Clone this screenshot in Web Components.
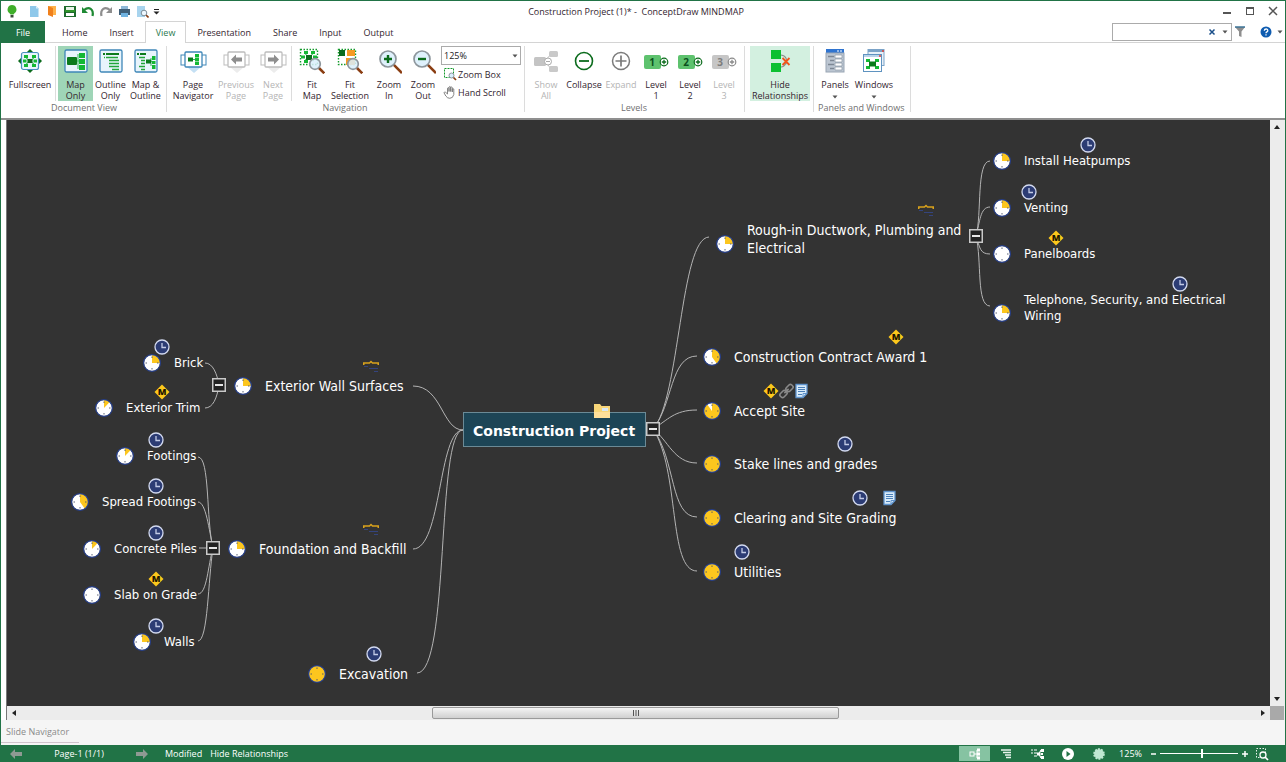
<!DOCTYPE html>
<html lang="en">
<head>
<meta charset="utf-8">
<title>Construction Project (1)* - ConceptDraw MINDMAP</title>
<style>
  html, body {
    height: 100%;
    margin: 0;
  }
  body {
    font-family: "Open Sans", "Noto Sans", sans-serif;
    font-size: 9px;
    color: #33252f;
    --green: #217346;
  }
</style>
</head>
<body>
<mindmap-app>
  <title-bar slot="title">Construction Project (1)* -&nbsp; ConceptDraw MINDMAP</title-bar>
  <tab-strip slot="tabs" tabs="Home,Insert,View,Presentation,Share,Input,Output" active="View"></tab-strip>

  <ribbon-bar slot="ribbon">
    <ribbon-group label="Document View">
      <ribbon-button icon="fullscreen" style="--w: 50px">Fullscreen</ribbon-button>
      <ribbon-rule></ribbon-rule>
      <ribbon-button icon="mapOnly" on style="--w: 35px">Map<br>Only</ribbon-button>
      <ribbon-button icon="outlineOnly" style="--w: 35px">Outline<br>Only</ribbon-button>
      <ribbon-button icon="mapOutline" style="--w: 35px">Map &amp;<br>Outline</ribbon-button>
    </ribbon-group>
    <ribbon-group label="Navigation">
      <ribbon-button icon="pageNavigator" style="--w: 48px">Page<br>Navigator</ribbon-button>
      <ribbon-button icon="previousPage" off style="--w: 38px">Previous<br>Page</ribbon-button>
      <ribbon-button icon="nextPage" off style="--w: 36px">Next<br>Page</ribbon-button>
      <ribbon-rule></ribbon-rule>
      <ribbon-button icon="fitMap" style="--w: 36px">Fit<br>Map</ribbon-button>
      <ribbon-button icon="fitSelection" style="--w: 40px">Fit<br>Selection</ribbon-button>
      <ribbon-button icon="zoomIn" style="--w: 38px">Zoom<br>In</ribbon-button>
      <ribbon-button icon="zoomOut" style="--w: 30px">Zoom<br>Out</ribbon-button>
      <zoom-panel></zoom-panel>
    </ribbon-group>
    <ribbon-group label="Levels">
      <ribbon-button icon="showAll" off style="--w: 38px">Show<br>All</ribbon-button>
      <ribbon-button icon="collapse" style="--w: 38px">Collapse</ribbon-button>
      <ribbon-button icon="expand" off style="--w: 36px">Expand</ribbon-button>
      <ribbon-button icon="level1" style="--w: 34px">Level<br>1</ribbon-button>
      <ribbon-button icon="level2" style="--w: 34px">Level<br>2</ribbon-button>
      <ribbon-button icon="level3" off style="--w: 34px">Level<br>3</ribbon-button>
    </ribbon-group>
    <ribbon-group label="">
      <ribbon-button icon="hideRelationships" hot style="--w: 60px">Hide<br>Relationships</ribbon-button>
    </ribbon-group>
    <ribbon-group label="Panels and Windows">
      <ribbon-button icon="panels" menu style="--w: 38px">Panels</ribbon-button>
      <ribbon-button icon="windows" menu style="--w: 40px">Windows</ribbon-button>
    </ribbon-group>
  </ribbon-bar>

  <mind-map slot="map" scroll-x="7" scroll-y="120">
    <root-topic x="463" y="412">Construction Project</root-topic>

    <map-topic x="725" y="239" tall progress="25" badges="brace" shift="171">Rough-in Ductwork, Plumbing and<br>Electrical</map-topic>
    <map-topic x="1002" y="161" sub progress="25" badges="clock" shift="56">Install Heatpumps</map-topic>
    <map-topic x="1002" y="208" sub progress="25" badges="clock" shift="-3">Venting</map-topic>
    <map-topic x="1002" y="254" sub progress="0" badges="milestone" shift="24">Panelboards</map-topic>
    <map-topic x="1002" y="308" sub tall progress="25" badges="clock" shift="148">Telephone, Security, and Electrical<br>Wiring</map-topic>
    <map-topic x="712" y="357" progress="40" badges="milestone" shift="154">Construction Contract Award 1</map-topic>
    <map-topic x="712" y="411" progress="90" badges="milestone,link,note" shift="29">Accept Site</map-topic>
    <map-topic x="712" y="464" progress="100" badges="clock" shift="103">Stake lines and grades</map-topic>
    <map-topic x="712" y="518" progress="100" badges="clock,blank,note" shift="118">Clearing and Site Grading</map-topic>
    <map-topic x="712" y="572" progress="100" badges="clock" shift="0">Utilities</map-topic>

    <map-topic x="243" y="386" progress="25" badges="brace" shift="98">Exterior Wall Surfaces</map-topic>
    <map-topic x="152" y="363" sub progress="25" badges="clock" shift="-20">Brick</map-topic>
    <map-topic x="104" y="408" sub progress="12" badges="milestone" shift="28">Exterior Trim</map-topic>
    <map-topic x="237" y="549" progress="25" badges="brace" shift="104">Foundation and Backfill</map-topic>
    <map-topic x="125" y="456" sub progress="12" badges="clock" shift="1">Footings</map-topic>
    <map-topic x="80" y="502" sub progress="40" badges="clock" shift="46">Spread Footings</map-topic>
    <map-topic x="92" y="549" sub progress="12" badges="clock" shift="34">Concrete Piles</map-topic>
    <map-topic x="92" y="595" sub progress="0" badges="milestone" shift="34">Slab on Grade</map-topic>
    <map-topic x="142" y="642" sub progress="25" badges="clock" shift="-16">Walls</map-topic>
    <map-topic x="317" y="674" progress="100" badges="clock" shift="27">Excavation</map-topic>
  </mind-map>

  <slide-panel slot="panel">Slide Navigator</slide-panel>
  <status-bar slot="status"></status-bar>
</mindmap-app>

<script>
const svg = (w, h, body) =>
  `<svg width="${w}" height="${h}" viewBox="0 0 ${w} ${h}" aria-hidden="true">${body}</svg>`;

const frame = '<rect x="1" y="2" width="22" height="22" rx="1.5" fill="#e8f4fc" stroke="#3f87b8" stroke-width="1.3"/>';
const lens = (x, y, r, body = '') => `
  <path d="M${x + r * 0.7} ${y + r * 0.7}L${x + r * 1.75} ${y + r * 1.75}" stroke="#8a3d12" stroke-width="2.6"/>
  <circle cx="${x}" cy="${y}" r="${r}" fill="#d9eefb" fill-opacity="0.85" stroke="#8d969c" stroke-width="1.7"/>${body}`;
const pagePair = (edge, fill) => `
  <path d="M7 19h14l-7 6z" fill="${fill}"/>
  <rect x="1" y="7" width="5" height="10" fill="#fff" stroke="${edge}"/>
  <rect x="21" y="7" width="5" height="10" fill="#fff" stroke="${edge}"/>
  <rect x="5" y="4" width="17" height="15" rx="1" fill="#fff" stroke="${edge}" stroke-width="1.3"/>`;
const level = (n, tile, edge, text) => svg(26, 26, `
  <rect x="1" y="7" width="17" height="14" rx="2" fill="${tile}"/>
  <text x="9" y="18" text-anchor="middle" font-family="Open Sans" font-weight="700" font-size="10" fill="${text}">${n}</text>
  <circle cx="21" cy="14" r="3.8" fill="#fff" stroke="${edge}" stroke-width="1.2"/>
  <path d="M18.8 14h4.4M21 11.8v4.4" stroke="${edge}" stroke-width="1.3"/>`);

const icons = {
  fullscreen: svg(26, 26, `
    <path d="M13 1l4 4H9zM13 25l4-4H9zM1 13l4-4v8zM25 13l-4-4v8z" fill="#0b6b1c"/>
    <rect x="4.500" y="4.500" width="17" height="17" rx="2" fill="#e8f4fc" stroke="#4a90c0" stroke-width="1.2"/>
    <path d="M8 9l10 8M18 9L8 17" stroke="#1fb53a" stroke-width="1"/>
    <path d="M7 7h4v3H7zM15 7h4v3h-4zM7 16h4v3H7zM15 16h4v3h-4zM6 11.500h3.500v3H6zM16.500 11.500H20v3h-3.500z" fill="#14b834"/>
    <rect x="10.500" y="11" width="5" height="4" fill="#0b6b1c"/>`),
  mapOnly: svg(24, 26, `${frame}
    <path d="M12 13h4M14 6v15" stroke="#35b558"/>
    <rect x="3" y="9" width="10" height="8" rx="1" fill="#0b7a1c"/>
    <path d="M15 5h6v5h-6zM15 11h6v5h-6zM15 17h6v5h-6z" fill="#14b834"/>`),
  outlineOnly: svg(24, 26, `${frame}
    <path d="M4 6h2M7 6h13" stroke="#0b7a1c" stroke-width="2"/>
    <path d="M7 9.500h12M10 12.500h10M10 15.500h10M10 18.500h10M13 21.500h7" stroke="#22a63a" stroke-width="1.700"/>
    <path d="M5 9.500h1" stroke="#14b834" stroke-width="1.500"/>`),
  mapOutline: svg(24, 26, `${frame}
    <path d="M3 6h2M6 6h6" stroke="#0b7a1c" stroke-width="2"/>
    <path d="M5 9.500h6M7 12.500h4M7 15.500h4M5 18.500h6M7 21.500h4" stroke="#22a63a" stroke-width="1.700"/>
    <path d="M14 13.500h4M17 10v8" stroke="#35b558"/>
    <rect x="12" y="11.500" width="5" height="4" fill="#0b7a1c"/>
    <path d="M18 8h3.500v4H18zM18 13h3.500v3H18zM18 17h3.500v4H18z" fill="#14b834"/>`),
  pageNavigator: svg(27, 26, `${pagePair('#3f87b8', '#c4e0f4')}
    <path d="M12 11.500h4" stroke="#35b558"/><rect x="8" y="9.500" width="5" height="4" fill="#0b7a1c"/>
    <path d="M15 6h4v3.500h-4zM15 10h4v3h-4zM15 13.500h4V17h-4z" fill="#14b834"/>`),
  previousPage: svg(27, 26, `${pagePair('#bdbdbd', '#ececec')}
    <path d="M8 11.500l5-5v3h6v4h-6v3z" fill="#8e8e8e"/>`),
  nextPage: svg(27, 26, `${pagePair('#bdbdbd', '#ececec')}
    <path d="M19 11.500l-5-5v3H8v4h6v3z" fill="#8e8e8e"/>`),
  fitMap: svg(26, 26, `
    <rect x="1.500" y="1.500" width="17" height="15" fill="none" stroke="#149a2c" stroke-dasharray="1.500 1.500" stroke-width="1.400"/>
    <path d="M5 5l10 8M15 5L5 13" stroke="#35b558"/>
    <path d="M5 3h4v3H5zM12 3h4v3h-4zM5 12h4v3H5zM2 7.500h4v3H2zM14 7.500h4v3h-4z" fill="#14b834"/>
    <rect x="7" y="7" width="6" height="5" fill="#0b6b1c"/>${lens(16, 16, 5.300)}`),
  fitSelection: svg(26, 26, `
    <rect x="1.500" y="1.500" width="17" height="15" fill="none" stroke="#149a2c" stroke-dasharray="1.500 1.500" stroke-width="1.400"/>
    <rect x="2" y="2" width="6" height="6" fill="#0b6b1c"/>
    <path d="M10 2h8v6h-8zM9 10h9v7H9z" fill="#f59a23"/>${lens(16, 16, 5.300)}`),
  zoomIn: svg(26, 26, lens(12, 11, 8, '<path d="M8 11h8M12 7v8" stroke="#0b6b1c" stroke-width="2.400"/>')),
  zoomOut: svg(26, 26, lens(12, 11, 8, '<path d="M8 11h8" stroke="#0b6b1c" stroke-width="2.400"/>')),
  zoomBox: svg(14, 14, `
    <rect x="1.500" y="1.500" width="9" height="9" fill="none" stroke="#149a2c" stroke-dasharray="2 1"/>
    <path d="M10 10l3 3" stroke="#8a3d12" stroke-width="1.700"/>
    <circle cx="8.500" cy="8.500" r="2.500" fill="#d9eefb" stroke="#8d969c"/>`),
  hand: svg(14, 14, `
    <path d="M4.500 9V3.200q.8-1 1.500 0V6.500 2q.8-1 1.700 0V6.500 2.500q.8-1 1.600 0V7 4q.8-.8 1.500 0v5.500q-.8 3.800-4 3.800-2.500 0-4-2.300L1 7.800q.2-1.300 1.700-.5z"
      fill="#fff" stroke="#777" stroke-width="0.900"/>`),
  showAll: svg(26, 26, `
    <path d="M12 13l6-7M12 13l6 8" stroke="#c4c4c4"/>
    <rect x="1" y="9" width="12" height="9" rx="1.500" fill="#c4c4c4"/>
    <rect x="16" y="3" width="9" height="6" rx="1.500" fill="#c9c9c9"/>
    <rect x="16" y="18" width="9" height="6" rx="1.500" fill="#c9c9c9"/>
    <circle cx="15" cy="13.500" r="3.500" fill="#fff" stroke="#aaa"/><path d="M13 13.500h4" stroke="#aaa"/>`),
  collapse: svg(26, 26, '<circle cx="13" cy="13" r="8.500" fill="none" stroke="#0b6b1c" stroke-width="1.600"/><path d="M8 13h10" stroke="#0b6b1c" stroke-width="1.800"/>'),
  expand: svg(26, 26, '<circle cx="13" cy="13" r="8.500" fill="none" stroke="#7b7b7b" stroke-width="1.500"/><path d="M7.500 13h11M13 7.500v11" stroke="#7b7b7b" stroke-width="1.700"/>'),
  level1: level(1, '#5ec26e', '#0b6b1c', '#0b4f1c'),
  level2: level(2, '#5ec26e', '#0b6b1c', '#0b4f1c'),
  level3: level(3, '#c6c6c6', '#8a8a8a', '#7d7d7d'),
  hideRelationships: svg(26, 26, `
    <path d="M14 7c6 1 6 5 5 9M14 19c3 0 4-2 5-4" fill="none" stroke="#8a8a8a" stroke-width="1.200"/>
    <path d="M4 2h10v9H4zM4 15h10v9H4z" fill="#0cc032"/>
    <path d="M15.500 10l7 7M22.500 10l-7 7" stroke="#f2551c" stroke-width="1.800"/>`),
  panels: svg(24, 26, `
    <rect x="3" y="1" width="18" height="4" fill="#2f74d0"/>
    <path d="M14 3h2M17 3h2" stroke="#fff"/>
    <rect x="3" y="5" width="18" height="19" fill="#bcc6d2" stroke="#9aa6b4"/>
    <path d="M5 8.500h6M7 12.500h4M5 16.500h6M7 20.500h4" stroke="#7d8794" stroke-width="1.500"/>
    <path d="M12 7h7v3h-7zM12 11h7v3h-7zM12 15h7v3h-7zM12 19h7v3h-7z" fill="#fff" stroke="#8b96a3" stroke-width="0.700"/>`),
  windows: svg(24, 26, `
    <rect x="6" y="1.500" width="16" height="16" fill="#e8f0f8" stroke="#7ba3c8"/>
    <path d="M6 3h16" stroke="#7ba3c8" stroke-width="2"/>
    <rect x="1.500" y="6.500" width="18" height="17" fill="#fff" stroke="#5f93c0"/>
    <path d="M2 8h17" stroke="#b9d3ea" stroke-width="2"/><path d="M20 3h2M17 8h2" stroke="#e0433a" stroke-width="1.500"/>
    <path d="M5 12l11 8M16 12L5 20" stroke="#35b558"/>
    <path d="M4 11h4v3H4zM13 11h4v3h-4zM4 18h4v3H4zM13 18h4v3h-4z" fill="#14b834"/>
    <rect x="7" y="13.500" width="7" height="5" fill="#0b7a1c"/>`),

  // title bar
  logo: svg(14, 14, '<path d="M7 1a4.500 4.500 0 0 1 2.500 8.200l-1 1.300h-3l-1-1.300A4.500 4.500 0 0 1 7 1z" fill="#3fae2a"/><path d="M5.500 11h3v2.500h-3z" fill="#3a4a3a"/>'),
  newDoc: svg(14, 14, '<path d="M3 2h6l2.500 2.500V13H3z" fill="#8ec8ea"/><path d="M9 2v2.500h2.500z" fill="#d8effb"/>'),
  open: svg(14, 14, '<path d="M3 2h8v9H3z" fill="#ffb24a"/><path d="M3 2l5 2v9l-5-2z" fill="#f0801c"/>'),
  save: svg(14, 14, '<path d="M1 2h12v11H1z" fill="#1d6b2c"/><path d="M3 3h8v3H3z" fill="#e8f4e8"/><path d="M3 9h8v3H3z" fill="#fff"/><path d="M2 7h10" stroke="#3fae2a" stroke-width="1.200"/>'),
  undo: svg(14, 14, '<path d="M3 6c5-4 10-1 8.500 6" fill="none" stroke="#1f8a34" stroke-width="2.200"/><path d="M1 3v6h6z" fill="#1f8a34"/>'),
  redo: svg(14, 14, '<path d="M11 6c-5-4-10-1-8.500 6" fill="none" stroke="#8e8e8e" stroke-width="2.200"/><path d="M13 3v6H7z" fill="#8e8e8e"/>'),
  print: svg(14, 14, '<path d="M4 2h7v3H4z" fill="#8fb9d8"/><path d="M2 5h11v6H2z" fill="#3f5f78"/><path d="M4 9h7v4H4z" fill="#6fb2e0"/>'),
  preview: svg(14, 14, '<path d="M2 2h8v11H2z" fill="#a8d4ee"/><path d="M10.500 10.500l3 3" stroke="#8a3d12" stroke-width="1.600"/><circle cx="9" cy="9" r="2.800" fill="#eef8ff" stroke="#7f8f9a"/>'),
  more: svg(7, 14, '<path d="M1 5.500h5" stroke="#222"/><path d="M.5 7.500h6l-3 3z" fill="#222"/>'),
  minimize: svg(12, 12, '<path d="M2 8h8" stroke="#555" stroke-width="2"/>'),
  maximize: svg(12, 12, '<rect x="2.500" y="2.500" width="7" height="7" fill="none" stroke="#555"/><path d="M2 3h8" stroke="#555" stroke-width="2"/>'),
  close: svg(12, 12, '<path d="M2 2l8 8M10 2l-8 8" stroke="#555" stroke-width="1.500"/>'),
  clear: svg(8, 8, '<path d="M1.500 1.500l5 5M6.500 1.500l-5 5" stroke="#1a4f8a" stroke-width="1.500"/>'),
  caret: svg(6, 4, '<path d="M0.500 0.500h5L3 3.500z" fill="#555"/>'),
  filter: svg(12, 12, '<path d="M1 1h10L7.500 5.500V11L5 10V5.500z" fill="#8e8e8e"/><path d="M1 1h10" stroke="#3d7599" stroke-width="1.500"/>'),
  help: svg(12, 12, '<circle cx="6" cy="6" r="5.500" fill="#0f5cb0"/><path d="M4.300 4.700q.1-1.700 1.800-1.700t1.700 1.500q0 .9-.9 1.400T6 7.300M6 8.300v1.300" fill="none" stroke="#fff" stroke-width="1.300"/>'),

  // map badges
  clock: svg(16, 16, '<circle cx="8" cy="8" r="7" fill="#2c3c74" stroke="#d3daf0" stroke-width="1.300"/><path d="M8 4v4.500h4" fill="none" stroke="#c3cbe6" stroke-width="1.300"/>'),
  milestone: svg(16, 16, '<path d="M8 .5L15.500 8 8 15.500.5 8z" fill="#fcc81c"/><text x="8" y="11" text-anchor="middle" font-family="Open Sans" font-weight="800" font-size="9" fill="#1c1600">M</text>'),
  brace: svg(16, 16, '<path d="M.75 7V5H6.500L8 3.500 9.500 5h5.750v2" fill="none" stroke="#d9a21c" stroke-width="1.500"/><path d="M1 8.500h4M6 10.500h9M11 13.500h4" stroke="#34447e"/>'),
  link: svg(15, 16, '<g fill="none" stroke="#8a8a8a" stroke-width="1.600" transform="rotate(-45 7.500 8)"><rect x="-0.500" y="5.500" width="7.500" height="5" rx="2"/><rect x="8" y="5.500" width="7.500" height="5" rx="2"/><path d="M4.500 8h6"/></g>'),
  note: svg(14, 16, '<path d="M2 1.500h11v9l-4 4H2z" fill="#d9ebfa" stroke="#5f93cc" stroke-width="1.300"/><path d="M4 4.500h7M4 6.500h7M4 8.500h7M4 11.500h4" stroke="#4a7fb8"/><path d="M13 10.500H9v4" fill="none" stroke="#5f93cc"/>'),
  blank: svg(14, 16, ''),
  folder: svg(16, 16, '<path d="M0 1h6l1.500 2H16v12H0z" fill="#f8d679"/><path d="M8 5h6v3H8z" fill="#d9e8f4"/><path d="M0 9h16v6H0z" fill="#ffe09a"/>'),
  toggle: svg(14, 14, '<rect x="0.750" y="0.750" width="12.500" height="12.500" fill="#222" stroke="#c9c9c9" stroke-width="1.500"/><path d="M3 7h8" stroke="#e6e6e6" stroke-width="2"/>'),

  // status bar
  arrowLeft: svg(12, 10, '<path d="M0 5l5-5v3h7v4H5v3z" fill="#8f9a93"/>'),
  arrowRight: svg(12, 10, '<path d="M12 5L7 0v3H0v4h7v3z" fill="#8f9a93"/>'),
  mapView: svg(14, 14, '<rect x="2" y="5" width="4" height="4" fill="none" stroke="#fff"/><path d="M6 7h3M9 3v8" stroke="#fff"/><path d="M9 1.500h3v3H9zM9 5.500h3v3H9zM9 9.500h3v3H9z" fill="#fff"/>'),
  outlineView: svg(14, 14, '<path d="M2 3h10M4 5.500h8M6 8h6M7 10.500h5" stroke="#e8f4ec" stroke-width="1.300"/>'),
  bothView: svg(14, 14, '<path d="M1 3h2M4 3h3M1 6h2M4 6h3M4 9h3M8 7h4M11 3l-2 4 2 4" fill="none" stroke="#fff" stroke-width="1.200"/><path d="M7 5.500h3v3H7zM11 2h3v3h-3zM11 6h2v2h-2zM11 9h3v3h-3z" fill="#fff"/>'),
  play: svg(14, 14, '<circle cx="7" cy="7" r="6" fill="#fff"/><path d="M5.500 4l4 3-4 3z" fill="#217346"/>'),
  gear: svg(14, 14, '<circle cx="7" cy="7" r="4.800" fill="#bfe8d2"/><circle cx="7" cy="7" r="4.800" fill="none" stroke="#bfe8d2" stroke-width="2" stroke-dasharray="1.900 1.100"/>'),
  zoomFit: svg(14, 14, '<rect x="1.500" y="1.500" width="9" height="9" fill="none" stroke="#e8f4ec" stroke-dasharray="1.500 1.500"/><circle cx="8" cy="8" r="3" fill="#217346" stroke="#fff" stroke-width="1.300"/><path d="M10 10l3 3" stroke="#fff" stroke-width="1.700"/>')
};

class BaseElement extends HTMLElement {
  constructor() {
    super();
    this.root = this.attachShadow({ mode: 'open' });
  }

  connectedCallback() {
    this.root.innerHTML = this.render();
  }
}

const buttonReset = `
  button {
    display: flex;
    align-items: center;
    justify-content: center;
    margin: 0;
    padding: 0;
    border: 0;
    background: none;
    color: inherit;
    font: inherit;
  }
  svg { display: block; }
`;

class MindmapApp extends BaseElement {
  render() {
    return `
      <style>
        :host {
          display: flex;
          flex-direction: column;
          box-sizing: border-box;
          height: 100vh;
          overflow: hidden;
          border: 1px solid var(--green);
          border-bottom: 0;
          background: #fff;
        }
        .work {
          flex: 1;
          min-height: 0;
          display: flex;
          border-top: 2px solid #8f8f8f;
          padding-left: 5px;
        }
        ::slotted(mind-map) { flex: 1; }
      </style>
      <slot name="title"></slot>
      <slot name="tabs"></slot>
      <slot name="ribbon"></slot>
      <div class="work"><slot name="map"></slot></div>
      <slot name="panel"></slot>
      <slot name="status"></slot>
    `;
  }
}

class TitleBar extends BaseElement {
  render() {
    const tools = ['logo', 'newDoc', 'open', 'save', 'undo', 'redo', 'print', 'preview', 'more'];
    return `
      <style>
        ${buttonReset}
        :host {
          display: grid;
          grid-template-columns: 1fr auto 1fr;
          align-items: center;
          height: 20px;
          flex: none;
        }
        .tools {
          display: flex;
          gap: 4px;
          padding-left: 4px;
        }
        .tools button:first-child { margin-right: 4px; }
        .title { padding-right: 14px; }
        .controls {
          display: flex;
          justify-content: flex-end;
          gap: 11px;
          padding-right: 6px;
        }
      </style>
      <div class="tools">${tools.map(t => `<button aria-label="${t}">${icons[t]}</button>`).join('')}</div>
      <div class="title"><slot></slot></div>
      <div class="controls">
        <button aria-label="Minimize">${icons.minimize}</button>
        <button aria-label="Maximize">${icons.maximize}</button>
        <button aria-label="Close">${icons.close}</button>
      </div>
    `;
  }
}

class TabStrip extends BaseElement {
  render() {
    const active = this.getAttribute('active');
    const tabs = this.getAttribute('tabs').split(',');
    return `
      <style>
        ${buttonReset}
        :host {
          display: flex;
          justify-content: space-between;
          height: 22px;
          flex: none;
          box-shadow: inset 0 -1px #d4d4d4;
        }
        .tabs { display: flex; }
        .tabs button {
          box-sizing: border-box;
          padding: 0 10px;
          border: 1px solid transparent;
          border-bottom: 0;
        }
        .tabs .file {
          width: 44px;
          margin-right: 6px;
          background: var(--green);
          color: #fff;
        }
        .tabs .active {
          border-color: #d4d4d4;
          background: #fff;
          color: #2c7a50;
        }
        .side {
          display: flex;
          align-items: center;
          gap: 2px;
          padding-right: 2px;
        }
        .search {
          display: flex;
          align-items: center;
          box-sizing: border-box;
          width: 120px;
          height: 18px;
          padding-right: 3px;
          gap: 6px;
          border: 1px solid #ababab;
        }
        .search input {
          flex: 1;
          min-width: 0;
          border: 0;
          padding: 0 4px;
          outline: 0;
          font: inherit;
        }
        .help { margin-left: 12px; }
        .last { margin-left: 3px; }
      </style>
      <div class="tabs">
        <button class="file">File</button>
        ${tabs.map(t => `<button class="${t === active ? 'active' : ''}">${t}</button>`).join('')}
      </div>
      <div class="side">
        <div class="search">
          <input type="text" aria-label="Search">
          <button aria-label="Clear">${icons.clear}</button>
          <button aria-label="Search options">${icons.caret}</button>
        </div>
        <button aria-label="Filter">${icons.filter}</button>
        <button class="help" aria-label="Help">${icons.help}</button>
        <button class="last" aria-label="Help options">${icons.caret}</button>
      </div>
    `;
  }
}

class RibbonBar extends BaseElement {
  render() {
    return `
      <style>
        :host {
          display: flex;
          height: 75px;
          flex: none;
          padding-left: 2px;
        }
      </style>
      <slot></slot>
    `;
  }
}

class RibbonGroup extends BaseElement {
  render() {
    return `
      <style>
        :host {
          display: flex;
          flex-direction: column;
          box-sizing: border-box;
          margin: 3px 0 6px;
          padding: 0 3px 0 2px;
          border-right: 1px solid #dcdcdc;
        }
        .row {
          display: flex;
          flex: none;
          height: 55px;
        }
        .label {
          text-align: center;
          line-height: 11px;
          padding: 1px 2px 0;
          color: #707070;
          white-space: nowrap;
        }
      </style>
      <div class="row"><slot></slot></div>
      <div class="label">${this.getAttribute('label')}</div>
    `;
  }
}

class RibbonRule extends BaseElement {
  render() {
    return `
      <style>
        :host {
          display: block;
          width: 1px;
          margin: 0 2px 0 0;
          background: #dcdcdc;
        }
      </style>
    `;
  }
}

class RibbonButton extends BaseElement {
  render() {
    return `
      <style>
        ${buttonReset}
        :host { display: block; width: var(--w); }
        :host([on]) { background: #9fd5b7; }
        :host([hot]) { background: #d3f0e0; margin-left: 3px; }
        :host([off]) { color: #b4b4b4; }
        button {
          flex-direction: column;
          justify-content: flex-start;
          gap: 5px;
          width: 100%;
          padding-top: 2px;
        }
        .text {
          line-height: 11px;
          text-align: center;
          white-space: nowrap;
        }
      </style>
      <button>
        ${icons[this.getAttribute('icon')]}
        <span class="text"><slot></slot></span>
        ${this.hasAttribute('menu') ? icons.caret : ''}
      </button>
    `;
  }
}

class ZoomPanel extends BaseElement {
  render() {
    return `
      <style>
        ${buttonReset}
        :host {
          display: flex;
          flex-direction: column;
          align-items: flex-start;
          width: 80px;
          margin-left: 3px;
        }
        .combo {
          display: grid;
          align-items: center;
          width: 100%;
        }
        .combo > * { grid-area: 1 / 1; }
        .combo svg { justify-self: end; margin-right: 3px; }
        select {
          appearance: none;
          box-sizing: border-box;
          width: 100%;
          height: 19px;
          padding: 0 2px;
          border: 1px solid #ababab;
          border-radius: 0;
          background: #fff;
          color: #222;
          font: inherit;
        }
        button { gap: 1px; height: 18px; padding-left: 2px; white-space: nowrap; }
      </style>
      <div class="combo">
        <select aria-label="Zoom"><option>125%</option></select>
        ${icons.caret}
      </div>
      <button>${icons.zoomBox}Zoom Box</button>
      <button>${icons.hand}Hand Scroll</button>
    `;
  }
}

const connectors = {
  root: [
    'M653 429C680 400 680 238 709 237', 'M653 429C673 405 670 356 697 356',
    'M653 429C668 420 674 410 697 410', 'M653 429C668 440 674 463 697 463',
    'M653 429C676 460 670 517 697 517', 'M653 429C680 470 668 571 697 571',
    'M463 430C442 430 442 386 413 386', 'M463 430C438 430 442 549 413 549',
    'M463 430C436 430 450 673 417 673'
  ],
  ductwork: [
    'M976 236C982 215 976 161 990 161', 'M976 236C980 222 980 207 990 207',
    'M976 236C980 248 980 254 990 254', 'M976 236C982 260 976 306 990 306'
  ],
  walls: ['M219 385C217 374 213 363 205 363', 'M219 385C217 398 213 408 205 408'],
  foundation: [
    'M213 548C206 520 210 457 198 457', 'M213 548C209 530 206 502 198 502',
    'M213 548H199', 'M213 548C208 565 207 594 198 594', 'M213 548C208 580 208 641 198 641'
  ]
};
const toggles = [[653, 429], [976, 236], [219, 385], [213, 548]];

class MindMap extends BaseElement {
  render() {
    const x = Number(this.getAttribute('scroll-x'));
    const y = Number(this.getAttribute('scroll-y'));
    this.querySelectorAll('map-topic, root-topic').forEach(topic => {
      topic.style.left = `${topic.getAttribute('x') - x}px`;
      topic.style.top = `${topic.getAttribute('y') - y}px`;
    });
    const lines = Object.values(connectors).flat().map(d => `<path d="${d}"/>`).join('');
    const boxes = toggles.map(([tx, ty]) =>
      `<button class="toggle" aria-label="Collapse branch" style="left:${tx - x - 7}px;top:${ty - y - 7}px">${icons.toggle}</button>`).join('');
    return `
      <style>
        ${buttonReset}
        :host {
          display: grid;
          grid-template: minmax(0, 1fr) 14px / minmax(0, 1fr) 14px;
          border-left: 1px solid #777;
          padding-right: 1px;
          background: #ececec;
        }
        .surface {
          position: relative;
          overflow: hidden;
          background: #333;
        }
        .lines {
          width: 100%;
          height: 100%;
          overflow: visible;
          fill: none;
          stroke: #b4b4b4;
        }
        .toggle { position: absolute; }
        .vertical, .horizontal {
          display: flex;
          align-items: center;
          justify-content: space-between;
          background: #ececec;
        }
        .vertical { flex-direction: column; padding: 5px 0; }
        .horizontal { padding: 0 5px; }
        .track { flex: 1; display: flex; margin-left: 416px; margin-right: 422px; }
        .thumb {
          flex: 1;
          box-sizing: border-box;
          height: 12px;
          border: 1px solid #9a9a9a;
          border-radius: 2px;
          background: linear-gradient(#f4f4f4, #d0d0d0);
        }
        .corner { background: #a9a9a9; }
      </style>
      <div class="surface">
        <svg class="lines"><g transform="translate(${-x} ${-y})">${lines}</g></svg>
        <slot></slot>
        ${boxes}
      </div>
      <div class="vertical">
        <button aria-label="Scroll up">${svg(6, 4, '<path d="M3 0l3 4H0z" fill="#222"/>')}</button>
        <button aria-label="Scroll down">${svg(6, 4, '<path d="M3 4l3-4H0z" fill="#222"/>')}</button>
      </div>
      <div class="horizontal">
        <button aria-label="Scroll left">${svg(4, 6, '<path d="M0 3l4-3v6z" fill="#222"/>')}</button>
        <div class="track"><button class="thumb" aria-label="Scroll map">${svg(6, 6, '<path d="M.5 0v6M3 0v6M5.500 0v6" stroke="#555"/>')}</button></div>
        <button aria-label="Scroll right">${svg(4, 6, '<path d="M4 3L0 0v6z" fill="#222"/>')}</button>
      </div>
      <div class="corner"></div>
    `;
  }
}

class RootTopic extends BaseElement {
  render() {
    return `
      <style>
        :host {
          position: absolute;
          box-sizing: border-box;
          padding: 9px 10px 6px 9px;
          border: 1px solid #6b8a96;
          background: #1d4556;
          color: #fff;
          font: bold 14px/18px "DejaVu Sans", sans-serif;
          white-space: nowrap;
        }
        svg { position: absolute; right: 35px; top: -10px; }
      </style>
      <slot></slot>${icons.folder}
    `;
  }
}

class MapTopic extends BaseElement {
  get pie() {
    const progress = Number(this.getAttribute('progress'));
    const angle = progress / 50 * Math.PI;
    const px = 9 + 8 * Math.sin(angle);
    const py = 9 - 8 * Math.cos(angle);
    const slice = progress === 100
      ? '<circle cx="9" cy="9" r="8" fill="#fcc61e"/>'
      : `<path d="M9 9V1A8 8 0 ${progress > 50 ? 1 : 0} 1 ${px} ${py}z" fill="#fcc61e"/>`;
    return svg(18, 18, `
      <circle cx="9" cy="9" r="8" fill="#fff"/>
      ${progress ? slice : ''}
      <circle cx="9" cy="9" r="8.400" fill="none" stroke="#27408c" stroke-width="1.200"/>
      <path d="M9 2.500V4M9 14v1.500M2.500 9H4M14 9h1.500" stroke="#4d5266" stroke-width="0.900"/>`);
  }

  render() {
    const badges = this.getAttribute('badges').split(',').map(b => icons[b]).join('');
    return `
      <style>
        :host {
          position: absolute;
          display: flex;
          align-items: center;
          gap: 13px;
          margin-left: -9px;
          transform: translateY(-50%);
          color: #fff;
          font: 14px/18px "DejaVu Sans Condensed", "DejaVu Sans", sans-serif;
          white-space: nowrap;
        }
        :host([sub]) { font-size: 13px; line-height: 16px; }
        svg { display: block; flex: none; }
        .pie { display: block; }
        :host([tall]) .pie { padding-top: 10px; }
        .label { position: relative; }
        .badges {
          position: absolute;
          bottom: 100%;
          left: ${this.getAttribute('shift')}px;
          display: flex;
          padding-bottom: 3px;
        }
        :host([sub]) .badges { padding-bottom: 0; }
      </style>
      <span class="pie">${this.pie}</span>
      <span class="label"><slot></slot><span class="badges">${badges}</span></span>
    `;
  }
}

class SlidePanel extends BaseElement {
  render() {
    return `
      <style>
        :host {
          display: flex;
          height: 25px;
          flex: none;
          background: #f5f5f5;
          color: #8a8a8a;
        }
        span {
          width: 73px;
          height: 22px;
          padding-left: 5px;
          line-height: 24px;
          border-bottom: 1px solid #d0c4cc;
        }
      </style>
      <span><slot></slot></span>
    `;
  }
}

class StatusBar extends BaseElement {
  render() {
    return `
      <style>
        ${buttonReset}
        :host {
          display: flex;
          align-items: center;
          height: 17px;
          flex: none;
          padding: 0 16px 0 9px;
          background: var(--green);
          color: #fff;
        }
        .page { width: 114px; text-align: center; }
        .states { display: flex; gap: 8px; margin-left: 17px; }
        .views { display: flex; margin-left: auto; }
        .views button { width: 31px; height: 15px; }
        .views .on { background: #86c3a2; }
        .zoom { display: flex; align-items: center; margin-left: 5px; gap: 3px; }
        label { margin-right: 6px; }
        input {
          appearance: none;
          width: 78px;
          height: 11px;
          margin: 0;
          background: linear-gradient(#fff, #fff) center / 100% 1px no-repeat;
        }
        input::-webkit-slider-thumb {
          appearance: none;
          width: 2px;
          height: 9px;
          background: #fff;
        }
        .fit { margin-left: 3px; }
      </style>
      <button aria-label="Previous page">${icons.arrowLeft}</button>
      <span class="page">Page-1 (1/1)</span>
      <button aria-label="Next page">${icons.arrowRight}</button>
      <div class="states"><span>Modified</span><span>Hide Relationships</span></div>
      <div class="views">
        <button class="on" aria-label="Map view">${icons.mapView}</button>
        <button aria-label="Outline view">${icons.outlineView}</button>
        <button aria-label="Map and outline view">${icons.bothView}</button>
        <button aria-label="Play">${icons.play}</button>
        <button aria-label="Settings">${icons.gear}</button>
      </div>
      <div class="zoom">
        <label for="zoom">125%</label>
        <button aria-label="Zoom out">${svg(6, 6, '<path d="M0 3h5" stroke="#fff" stroke-width="1.500"/>')}</button>
        <input id="zoom" type="range" min="0" max="100" value="54">
        <button aria-label="Zoom in">${svg(8, 8, '<path d="M1 4h6M4 1v6" stroke="#fff" stroke-width="1.500"/>')}</button>
        <button class="fit" aria-label="Zoom to fit">${icons.zoomFit}</button>
      </div>
    `;
  }
}

customElements.define('mindmap-app', MindmapApp);
customElements.define('title-bar', TitleBar);
customElements.define('tab-strip', TabStrip);
customElements.define('ribbon-bar', RibbonBar);
customElements.define('ribbon-group', RibbonGroup);
customElements.define('ribbon-rule', RibbonRule);
customElements.define('ribbon-button', RibbonButton);
customElements.define('zoom-panel', ZoomPanel);
customElements.define('mind-map', MindMap);
customElements.define('root-topic', RootTopic);
customElements.define('map-topic', MapTopic);
customElements.define('slide-panel', SlidePanel);
customElements.define('status-bar', StatusBar);
</script>
</body>
</html>
